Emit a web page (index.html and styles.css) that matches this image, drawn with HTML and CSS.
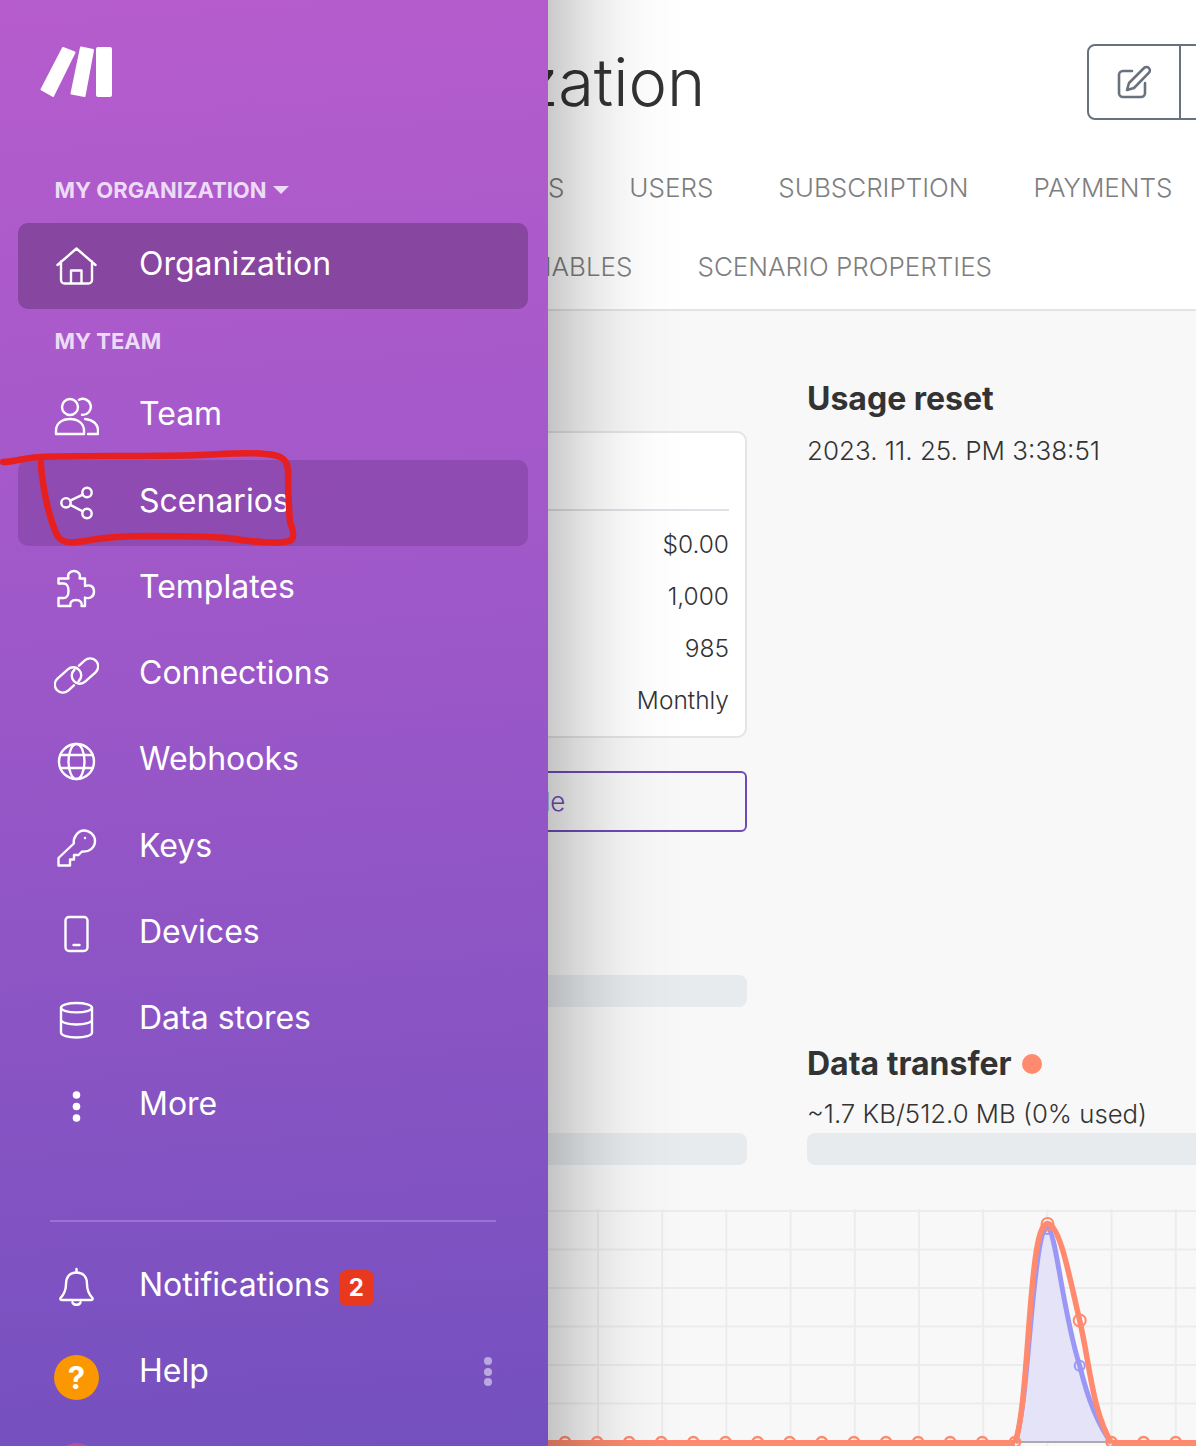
FILE: index.html
```
<!DOCTYPE html>
<html>
	<head>
		<meta charset="UTF-8">
		<title>Organization</title>
		<link rel="stylesheet" href="styles.css">
	</head>
	<body>
		<div class="main">
			<div class="top">
				<div class="title-row">
					<h1>Organization</h1>
					<div class="btn-group">
						<div class="btn-item">
							<svg width="34" height="34" viewBox="0 0 34 34" fill="none" stroke="#67727e" stroke-width="2.6" stroke-linecap="round" stroke-linejoin="round">
								<path d="M15 6H6a4 4 0 0 0-4 4v18a4 4 0 0 0 4 4h18a4 4 0 0 0 4-4V18"/>
								<path d="M27 3a3.4 3.4 0 0 1 5 4.600L17 23l-7 2 2-7z"/>
							</svg>
						</div>
						<div class="btn-item"></div>
					</div>
				</div>
				<ul class="tabs">
					<li>TEAMS</li>
					<li>USERS</li>
					<li>SUBSCRIPTION</li>
					<li>PAYMENTS</li>
				</ul>
				<ul class="tabs second">
					<li>VARIABLES</li>
					<li>SCENARIO PROPERTIES</li>
				</ul>
			</div>
			<div class="content">
				<div class="col">
					<div class="card">
						<div class="card-head"></div>
						<div class="card-row">$0.00</div>
						<div class="card-row">1,000</div>
						<div class="card-row">985</div>
						<div class="card-row">Monthly</div>
					</div>
					<div class="btn-outline">Upgrade</div>
					<div class="bar first"></div>
					<div class="bar second"></div>
				</div>
				<div class="col">
					<h2 class="usage">Usage reset</h2>
					<p class="val">2023. 11. 25. PM 3:38:51</p>
					<h2 class="transfer">Data transfer <span class="dot"></span></h2>
					<p class="val small">~1.7 KB/512.0 MB (0% used)</p>
					<div class="bar"></div>
				</div>
			</div>
			<svg class="chart" width="988" height="241" viewBox="283 1205 988 241" fill="none">
				<defs>
					<pattern id="grid" x="276" y="1210" width="64.200" height="38.500" patternUnits="userSpaceOnUse">
						<path d="M0 0H64.200M0 0V38.500" stroke="#ececec" stroke-width="4"/>
					</pattern>
				</defs>
				<rect x="283" y="1209" width="988" height="237" fill="url(#grid)"/>
				<path d="M1015 1443C1030 1400 1032 1228 1047.500 1228.500C1056 1229 1062 1310 1079.700 1365.700C1088 1400 1098 1425 1111.500 1443Z" fill="#e4e3f7"/>
				<path d="M1015 1442H1111" stroke="#aaaab2" stroke-width="2"/>
				<path d="M1015 1443C1030 1400 1032 1228 1047.500 1228.500C1056 1229 1062 1310 1079.700 1365.700C1088 1400 1098 1425 1111.500 1443" stroke="#9b97f5" stroke-width="5"/>
				<circle cx="1047.500" cy="1229" r="5" stroke="#9b97f5" stroke-width="2"/>
				<circle cx="1079.700" cy="1365.700" r="5" stroke="#9b97f5" stroke-width="2"/>
				<path d="M283 1443H1015M1111.500 1443H1271" stroke="#ff8a6e" stroke-width="6"/>
				<path d="M1015 1443C1030 1400 1028 1223 1047.500 1223.500C1060 1224 1070 1280 1079.700 1320.500C1090 1365 1092 1410 1111.500 1443" stroke="#ff8a6e" stroke-width="5.500"/>
				<circle cx="1047.500" cy="1224" r="6" stroke="#ff8a6e" stroke-width="2"/>
				<circle cx="1079.700" cy="1320.500" r="6" stroke="#ff8a6e" stroke-width="2"/>
				<g stroke="#ff8a6e" stroke-width="2.500">
					<circle cx="565" cy="1442" r="5"/><circle cx="597.100" cy="1442" r="5"/><circle cx="629.200" cy="1442" r="5"/>
					<circle cx="661.300" cy="1442" r="5"/><circle cx="693.400" cy="1442" r="5"/><circle cx="725.500" cy="1442" r="5"/>
					<circle cx="757.600" cy="1442" r="5"/><circle cx="789.700" cy="1442" r="5"/><circle cx="821.800" cy="1442" r="5"/>
					<circle cx="853.900" cy="1442" r="5"/><circle cx="886" cy="1442" r="5"/><circle cx="918.100" cy="1442" r="5"/>
					<circle cx="950.200" cy="1442" r="5"/><circle cx="982.300" cy="1442" r="5"/><circle cx="1015" cy="1442" r="5"/>
					<circle cx="1111.500" cy="1442" r="5"/><circle cx="1143.600" cy="1442" r="5"/><circle cx="1175.700" cy="1442" r="5"/>
				</g>
			</svg>
		</div>

		<div class="sidebar">
			<svg class="logo" width="73" height="52" viewBox="0 0 73 52" fill="#fff" stroke="#fff" stroke-width="2" stroke-linejoin="round">
				<polygon points="23,2 34.500,6.500 13,50 1.500,43.500"/>
				<polygon points="41,1.500 53,4 44.500,50 31.500,47.500"/>
				<rect x="57" y="2" width="14" height="48" rx="1"/>
			</svg>

			<div class="label org">MY ORGANIZATION<span class="caret"></span></div>
			<div class="nav-item active">
				<svg class="icon" viewBox="0 0 45 45"><path d="M3.500 21L22.500 4.500L41.500 21M7 17.500V36a3.500 3.500 0 0 0 3.500 3.500h24A3.500 3.500 0 0 0 38 36V17.500M17 39.500V26.500H27.500V39.500"/></svg>
				<span>Organization</span>
			</div>
			<div class="label team">MY TEAM</div>
			<div class="nav-item">
				<svg class="icon" viewBox="0 0 45 45"><circle cx="16" cy="13" r="8"/><path d="M2 40v-3.500C2 29.500 8 25 16 25s14 4.500 14 11.500V40z"/><path d="M25 5.800a8 8 0 1 1 3 15M31 25c7.500.5 13 5 13 11.500V40H34"/></svg>
				<span>Team</span>
			</div>
			<div class="nav-item current">
				<svg class="icon" viewBox="0 0 45 45"><circle cx="12" cy="21.800" r="4.700"/><circle cx="33" cy="11.500" r="4.700"/><circle cx="33" cy="32.500" r="4.700"/><path d="M16.200 19.700L28.800 13.600M16.200 23.900L28.800 30.400"/></svg>
				<span>Scenarios</span>
			</div>
			<div class="nav-item">
				<svg class="icon" viewBox="0 0 45 45"><path d="M4.500 11.500H14.500c-1.500-4 1-7.500 5.500-7.500s7 3.500 5.500 7.500H31V19c4-1.500 9-.5 9 5.500s-5 7.500-9 6V39H27.500c1-3-1-6-5.500-6s-6.500 3-5.500 6H4.500V31H10c3 0 4.500-3 4.500-7s-1.500-7.500-4.500-7.500H4.500Z"/></svg>
				<span>Templates</span>
			</div>
			<div class="nav-item">
				<svg class="icon" viewBox="0 0 45 45"><g transform="rotate(-42 22.500 22.500)"><path d="M14 28.150H6.200a8 8 0 0 1 0-16H20.200a8 8 0 0 1 0 16H21"/><path d="M31 16.850H38.800a8 8 0 0 1 0 16H24.800a8 8 0 0 1 0-16"/></g></svg>
				<span>Connections</span>
			</div>
			<div class="nav-item">
				<svg class="icon" viewBox="0 0 45 45"><circle cx="22.500" cy="22.500" r="17.500"/><ellipse cx="22.500" cy="22.500" rx="8" ry="17.500"/><path d="M6.500 16H38.500M6.500 29H38.500"/></svg>
				<span>Webhooks</span>
			</div>
			<div class="nav-item">
				<svg class="icon" viewBox="0 0 45 45"><path d="M4.500 39.500V32L19.800 17.500C19 12 23.500 4.500 30 4.500C36 4.500 41 9.500 41 15C41 21.500 35 26.500 28 25.500L24.500 29H20V33.500H16V39.500Z"/><circle class="solid" cx="31" cy="12" r="1.200"/></svg>
				<span>Keys</span>
			</div>
			<div class="nav-item">
				<svg class="icon" viewBox="0 0 45 45"><rect x="11.500" y="5" width="22" height="34" rx="3.500"/><path d="M19.500 33H25.500"/></svg>
				<span>Devices</span>
			</div>
			<div class="nav-item">
				<svg class="icon" viewBox="0 0 45 45"><ellipse cx="22.500" cy="9.700" rx="15.500" ry="4.700"/><path d="M7 9.700V34.500C7 37.500 14 39.500 22.500 39.500S38 37.500 38 34.500V9.700M7 21.500C7 24.500 14 26.500 22.500 26.500S38 24.500 38 21.500"/></svg>
				<span>Data stores</span>
			</div>
			<div class="nav-item">
				<svg class="icon" viewBox="0 0 45 45"><g class="solid"><circle cx="22.500" cy="11" r="3.800"/><circle cx="22.500" cy="22.500" r="3.800"/><circle cx="22.500" cy="34" r="3.800"/></g></svg>
				<span>More</span>
			</div>

			<div class="side-line"></div>

			<div class="nav-item">
				<svg class="icon" viewBox="0 0 45 45"><path d="M22.500 4V7.500C15.500 7.500 12 12.500 12 19C12 26 10 29.500 6.500 33C6 34.500 7 35 8 35H37C38 35 39 34.500 38.500 33C35 29.500 33 26 33 19C33 12.500 29.500 7.500 22.500 7.500M18.500 37.500C19.500 40.500 25.500 40.500 26.500 37.500"/></svg>
				<span>Notifications</span>
				<span class="badge">2</span>
			</div>
			<div class="nav-item">
				<div class="help-icon">?</div>
				<span>Help</span>
				<div class="kebab up"><i></i><i></i><i></i></div>
			</div>
			<div class="nav-item">
				<div class="avatar"></div>
				<div class="name-tip"></div>
				<div class="kebab"><i></i><i></i><i></i></div>
			</div>
		</div>

		<svg class="scribble" width="300" height="100" viewBox="0 450 300 100" fill="none">
			<path d="M3 462C15 462 28 457 40 457C80 455 150 457 200 455C225 454 250 452 265 454C280 455 287 458 288 470C288 490 289 510 290 522C293 530 295 538 291 540C285 544 260 543 227 538C200 536 170 536 150 536C125 536 100 538 85 541C72 543 62 544 57 535C50 520 44 495 42 475C41 470 41 466 41 463" stroke="#e81f1f" stroke-width="6.500" stroke-linecap="round" stroke-linejoin="round"/>
		</svg>
	</body>
</html>
```

FILE: styles.css
```
*{
	margin: 0;
	padding: 0;
	box-sizing: border-box;
}
html,body{
	width: 1196px;
	height: 1446px;
	overflow: hidden;
}
body{
	background-color: #f8f8f8;
	font-family: Inter, "Noto Sans", sans-serif;
	color: #333;
	position: relative;
}
ul{
	list-style: none;
}

/* page behind the menu */
.main{
	width: 1271px;
	padding-left: 283px;
}
.top{
	margin-left: -283px;
	padding-left: 283px;
	height: 311px;
	background-color: #fff;
	border-bottom: 2px solid #e3e3e8;
}
.title-row{
	display: flex;
	justify-content: space-between;
	padding-top: 44px;
	height: 120px;
}
h1{
	font-size: 65px;
	font-weight: 300;
	line-height: 75px;
	margin-left: 40px;
	margin-top: 1px;
	color: #333;
}
.btn-group{
	display: flex;
	border: 2px solid #67727e;
	border-radius: 8px;
	height: 76px;
	width: 184px;
}
.btn-item{
	width: 91px;
	display: flex;
	align-items: center;
	justify-content: center;
}
.btn-item + .btn-item{
	border-left: 2px solid #67727e;
}
.tabs{
	display: flex;
	gap: 65px;
	margin-left: 192px;
	margin-top: 50px;
	font-size: 26px;
	font-weight: 300;
	line-height: 36px;
	color: #7e7e7e;
}
.tabs.second{
	margin-left: 212px;
	margin-top: 43px;
}

.content{
	display: grid;
	grid-template-columns: 464px 464px;
	gap: 60px;
}
.col{
	display: flex;
	flex-direction: column;
}
.card{
	margin-top: 120px;
	height: 307px;
	background-color: #fff;
	border: 2px solid #e4e4e9;
	border-radius: 10px;
	padding: 0 16px;
}
.card-head{
	height: 78px;
	border-bottom: 2px solid #e0e0e6;
	margin-bottom: 7px;
}
.card-row{
	height: 52px;
	line-height: 52px;
	text-align: right;
	font-size: 24.5px;
	font-weight: 300;
}
.btn-outline{
	margin-top: 33px;
	height: 61px;
	padding-right: 4px;
	border: 2px solid #6f4bb8;
	border-radius: 6px;
	color: #6f4bb8;
	font-size: 26px;
	font-weight: 300;
	line-height: 57px;
	text-align: center;
}
.bar{
	height: 32px;
	background-color: #e8ebee;
	border-radius: 8px;
}
.bar.first{
	margin-top: 143px;
}
.bar.second{
	margin-top: 126px;
}
h2{
	font-size: 32px;
	font-weight: 700;
	line-height: 40px;
}
.usage{
	margin-top: 68px;
}
.val{
	font-size: 26px;
	font-weight: 300;
	line-height: 36px;
	margin-top: 14px;
}
.transfer{
	margin-top: 575px;
	display: flex;
	align-items: center;
	gap: 10px;
}
.val.small{
	font-size: 25.75px;
	margin-top: 12px;
	margin-bottom: 1px;
}
.dot{
	width: 20px;
	height: 20px;
	border-radius: 50%;
	background-color: #ff8a6e;
}
.chart{
	display: block;
	position: absolute;
	left: 283px;
	top: 1205px;
}

/* slide-out menu */
.sidebar{
	position: absolute;
	left: 0;
	top: 0;
	z-index: 1;
	width: 548px;
	height: 1446px;
	padding: 46px 20px 0 18px;
	background: linear-gradient(176deg, #b65ccd 0%, #a058c9 40%, #7450bf 100%);
	color: #fff;
}
.sidebar::before{
	content: "";
	position: absolute;
	left: 0;
	top: -300px;
	z-index: -1;
	width: 100%;
	height: 2046px;
	box-shadow: 0 0 110px rgba(0,0,0,.42);
}
.logo{
	display: block;
	margin-left: 22px;
}
.label{
	padding-left: 36.5px;
	font-size: 22px;
	font-weight: 700;
	line-height: 28px;
	color: #ecdaf6;
}
.label.org{
	margin-top: 78px;
	margin-bottom: 19px;
	display: flex;
	align-items: center;
}
.label.team{
	margin-top: 18px;
	margin-bottom: 18.5px;
}
.caret{
	margin-left: 6px;
	width: 0;
	height: 0;
	border-left: 8px solid transparent;
	border-right: 8px solid transparent;
	border-top: 8px solid #ecdaf6;
}
.nav-item{
	display: flex;
	align-items: center;
	gap: 40px;
	height: 86.25px;
	padding-left: 36px;
	padding-right: 36px;
	border-radius: 10px;
	font-size: 32px;
	font-weight: 400;
}
.nav-item span{
	position: relative;
	top: -3px;
}
.nav-item.active{
	background-color: #87469f;
}
.nav-item.current{
	background-color: rgba(104,50,130,.33);
}
.icon{
	width: 45px;
	height: 45px;
	flex-shrink: 0;
	fill: none;
	stroke: #fff;
	stroke-width: 2.4;
	stroke-linecap: round;
	stroke-linejoin: round;
}
.icon .solid, .solid{
	fill: #fff;
	stroke: none;
}
.side-line{
	height: 2px;
	margin: 69.5px 32px 23px 32px;
	background-color: #9a72d3;
}
.nav-item .badge{
	top: 0;
	margin-left: -31px;
	width: 35px;
	height: 36px;
	background-color: #e8391f;
	border-radius: 8px;
	font-size: 24px;
	font-weight: 700;
	line-height: 36px;
	text-align: center;
}
.help-icon{
	width: 45px;
	height: 45px;
	margin-top: 7px;
	flex-shrink: 0;
	border-radius: 50%;
	background-color: #fb9700;
	text-align: center;
	font-size: 31px;
	font-weight: 700;
	line-height: 45px;
}
.avatar{
	width: 45px;
	height: 45px;
	margin-top: 11px;
	flex-shrink: 0;
	border-radius: 50%;
	background-color: #b5509a;
}
/* only the top of the name shows at the bottom of the window */
.name-tip{
	width: 10px;
	height: 30px;
	margin-left: 129px;
	margin-top: 3px;
	border-radius: 50%;
	background-color: #fff;
}
.kebab{
	margin-left: auto;
	display: flex;
	flex-direction: column;
	gap: 2.5px;
}
.kebab.up{
	margin-bottom: 4px;
}
.kebab i{
	display: block;
	width: 8px;
	height: 8px;
	border-radius: 50%;
	background-color: rgba(255,255,255,.5);
}

/* red pen mark on top of the screenshot */
.scribble{
	position: absolute;
	left: 0;
	top: 450px;
	z-index: 2;
}
```
